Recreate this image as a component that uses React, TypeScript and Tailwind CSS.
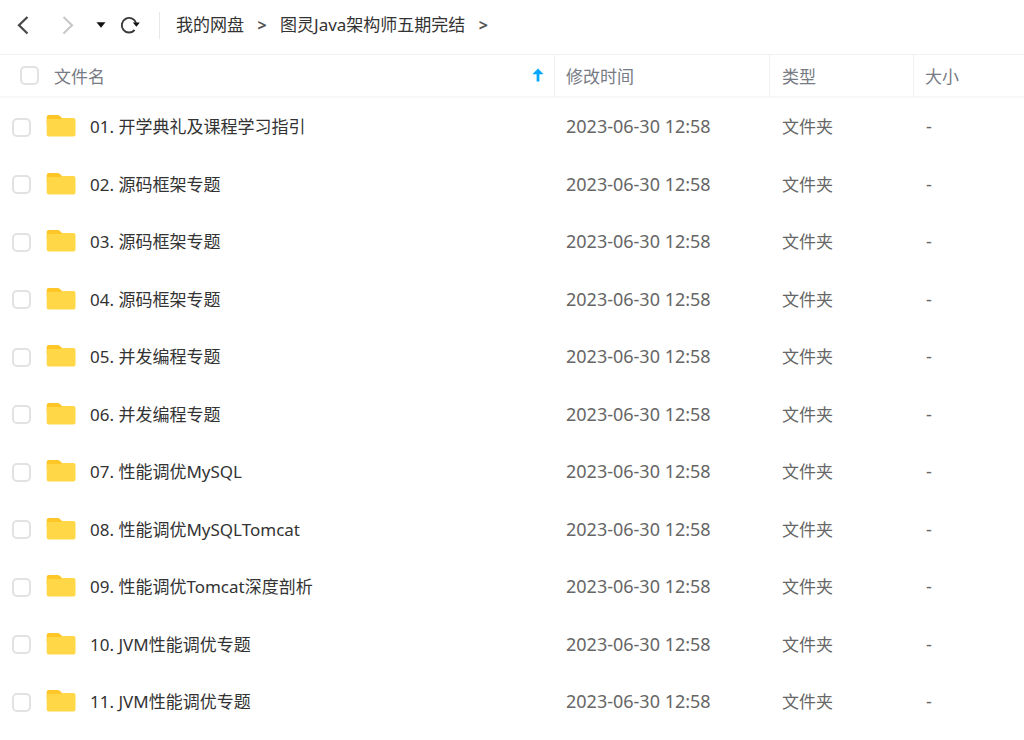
import React, { useState } from 'react';

interface FileEntry {
  name: string;
  modified: string;
  type: string;
  size: string;
}

const FOLDER_NAMES = [
  '01. 开学典礼及课程学习指引',
  '02. 源码框架专题',
  '03. 源码框架专题',
  '04. 源码框架专题',
  '05. 并发编程专题',
  '06. 并发编程专题',
  '07. 性能调优MySQL',
  '08. 性能调优MySQLTomcat',
  '09. 性能调优Tomcat深度剖析',
  '10. JVM性能调优专题',
  '11. JVM性能调优专题',
];

const FILES: FileEntry[] = FOLDER_NAMES.map((name) => ({
  name,
  modified: '2023-06-30 12:58',
  type: '文件夹',
  size: '-',
}));

const PATH = ['我的网盘', '图灵Java架构师五期完结'];

function FolderIcon() {
  return (
    <svg width="30" height="22" viewBox="0 0 30 22" className="mb-0.5 shrink-0" aria-hidden="true">
      <path d="M0.7 2Q0.7 0 2.7 0H11.5Q13 0 14 1L17 4V9H0.7Z" fill="#ffc628" />
      <path
        d="M0.7 5.5Q0.7 4 2.2 4H13.5Q14.5 4 15.5 3.5Q16.5 3 17.5 3H27.5Q29.5 3 29.5 5V19.5Q29.5 21.5 27.5 21.5H2.7Q0.7 21.5 0.7 19.5Z"
        fill="#ffd747"
      />
    </svg>
  );
}

interface CheckBoxProps {
  label: string;
  checked: boolean;
  onChange: () => void;
}

function CheckBox({ label, checked, onChange }: CheckBoxProps) {
  return (
    <input
      type="checkbox"
      aria-label={label}
      checked={checked}
      onChange={onChange}
      className="size-[19px] shrink-0 appearance-none rounded-[5px] border-2 border-[#e2e2e2] bg-white checked:border-[#06a7ff] checked:bg-[#06a7ff]"
    />
  );
}

function Toolbar() {
  return (
    <header className="flex h-[55px] items-center border-b border-[#f2f2f2] pb-1 pl-4">
      <button type="button" aria-label="后退" className="flex w-11 items-center">
        <svg width="14" height="20" viewBox="0 0 14 20" fill="none">
          <path d="M11.5 2L3 10.2L11.5 18.5" stroke="#4a4a4a" strokeWidth="2.3" />
        </svg>
      </button>
      <button type="button" aria-label="前进" className="flex w-9 items-center">
        <svg width="14" height="20" viewBox="0 0 14 20" fill="none">
          <path d="M3.5 2L12 10.2L3.5 18.5" stroke="#c8c8c8" strokeWidth="2.1" />
        </svg>
      </button>
      <button type="button" aria-label="历史记录" className="flex w-6 items-center">
        <svg width="10" height="6" viewBox="0 0 10 6">
          <path d="M0.5 0.3H9.5L5 5.8Z" fill="#111" />
        </svg>
      </button>
      <button type="button" aria-label="刷新" className="flex items-center">
        <svg width="20" height="18" viewBox="0 0 20 18" fill="none">
          <path d="M14.6 14A7.3 7.3 0 1 1 16 6.8" stroke="#3a3a3a" strokeWidth="1.9" />
          <path d="M12.8 6.6H19.8L16.4 10.8Z" fill="#111" />
        </svg>
      </button>
      <nav aria-label="路径" className="ml-[19px] flex h-[27px] items-center border-l border-[#e8e8e8] pl-4">
        {PATH.map((part) => (
          <React.Fragment key={part}>
            <a href="#" className="text-[17px] leading-6 whitespace-nowrap text-[#333]">
              {part}
            </a>
            <span className="w-9 text-center text-base leading-6 font-bold text-[#555]">&gt;</span>
          </React.Fragment>
        ))}
      </nav>
    </header>
  );
}

export default function App() {
  const [selected, setSelected] = useState<string[]>([]);

  const toggle = (name: string) => {
    setSelected((prev) => (prev.includes(name) ? prev.filter((n) => n !== name) : [...prev, name]));
  };

  const allSelected = selected.length === FILES.length;

  return (
    <div className="min-h-screen bg-white font-['Noto_Sans','Noto_Sans_CJK_SC',sans-serif] text-[17px] leading-6 text-[#333]">
      <Toolbar />
      <table className="w-full table-fixed border-separate border-spacing-0 text-left">
        <colgroup>
          <col />
          <col className="w-[215px]" />
          <col className="w-[144px]" />
          <col className="w-[110px]" />
        </colgroup>
        <thead>
          <tr className="h-[43px] text-[#777b84] [&>th]:border-b-2 [&>th]:border-b-[#f7f7f7] [&>th]:p-0 [&>th]:font-normal">
            <th className="border-r border-r-[#f0f0f0]">
              <div className="flex items-center pr-[10px] pl-5">
                <CheckBox
                  label="全选"
                  checked={allSelected}
                  onChange={() => setSelected(allSelected ? [] : FILES.map((f) => f.name))}
                />
                <span className="ml-[15px] flex-1 pt-0.5">文件名</span>
                <svg width="12" height="14" viewBox="0 0 12 14" className="mb-0.5" aria-hidden="true">
                  <path d="M6 0.5L11.6 6.3H7.4V13.5H4.6V6.3H0.4Z" fill="#06a7ff" />
                </svg>
              </div>
            </th>
            <th className="border-r border-r-[#f0f0f0]">
              <div className="pt-0.5 pl-[11px]">修改时间</div>
            </th>
            <th className="border-r border-r-[#f0f0f0]">
              <div className="pt-0.5 pl-3">类型</div>
            </th>
            <th>
              <div className="pt-0.5 pl-[11px]">大小</div>
            </th>
          </tr>
        </thead>
        <tbody>
          {FILES.map((file) => (
            <tr key={file.name} className="text-[#666] odd:h-[58px] even:h-[57px] [&>td]:p-0">
              <td>
                <div className="flex items-center pl-3">
                  <CheckBox label={file.name} checked={selected.includes(file.name)} onChange={() => toggle(file.name)} />
                  <a href="#" className="ml-[15px] flex items-center gap-[14px] text-[#333]">
                    <FolderIcon />
                    {file.name}
                  </a>
                </div>
              </td>
              <td>
                <div className="pb-0.5 pl-[11px] text-lg leading-6">{file.modified}</div>
              </td>
              <td>
                <div className="pl-3">{file.type}</div>
              </td>
              <td>
                <div className="pb-0.5 pl-3 text-lg leading-6">{file.size}</div>
              </td>
            </tr>
          ))}
        </tbody>
      </table>
    </div>
  );
}
